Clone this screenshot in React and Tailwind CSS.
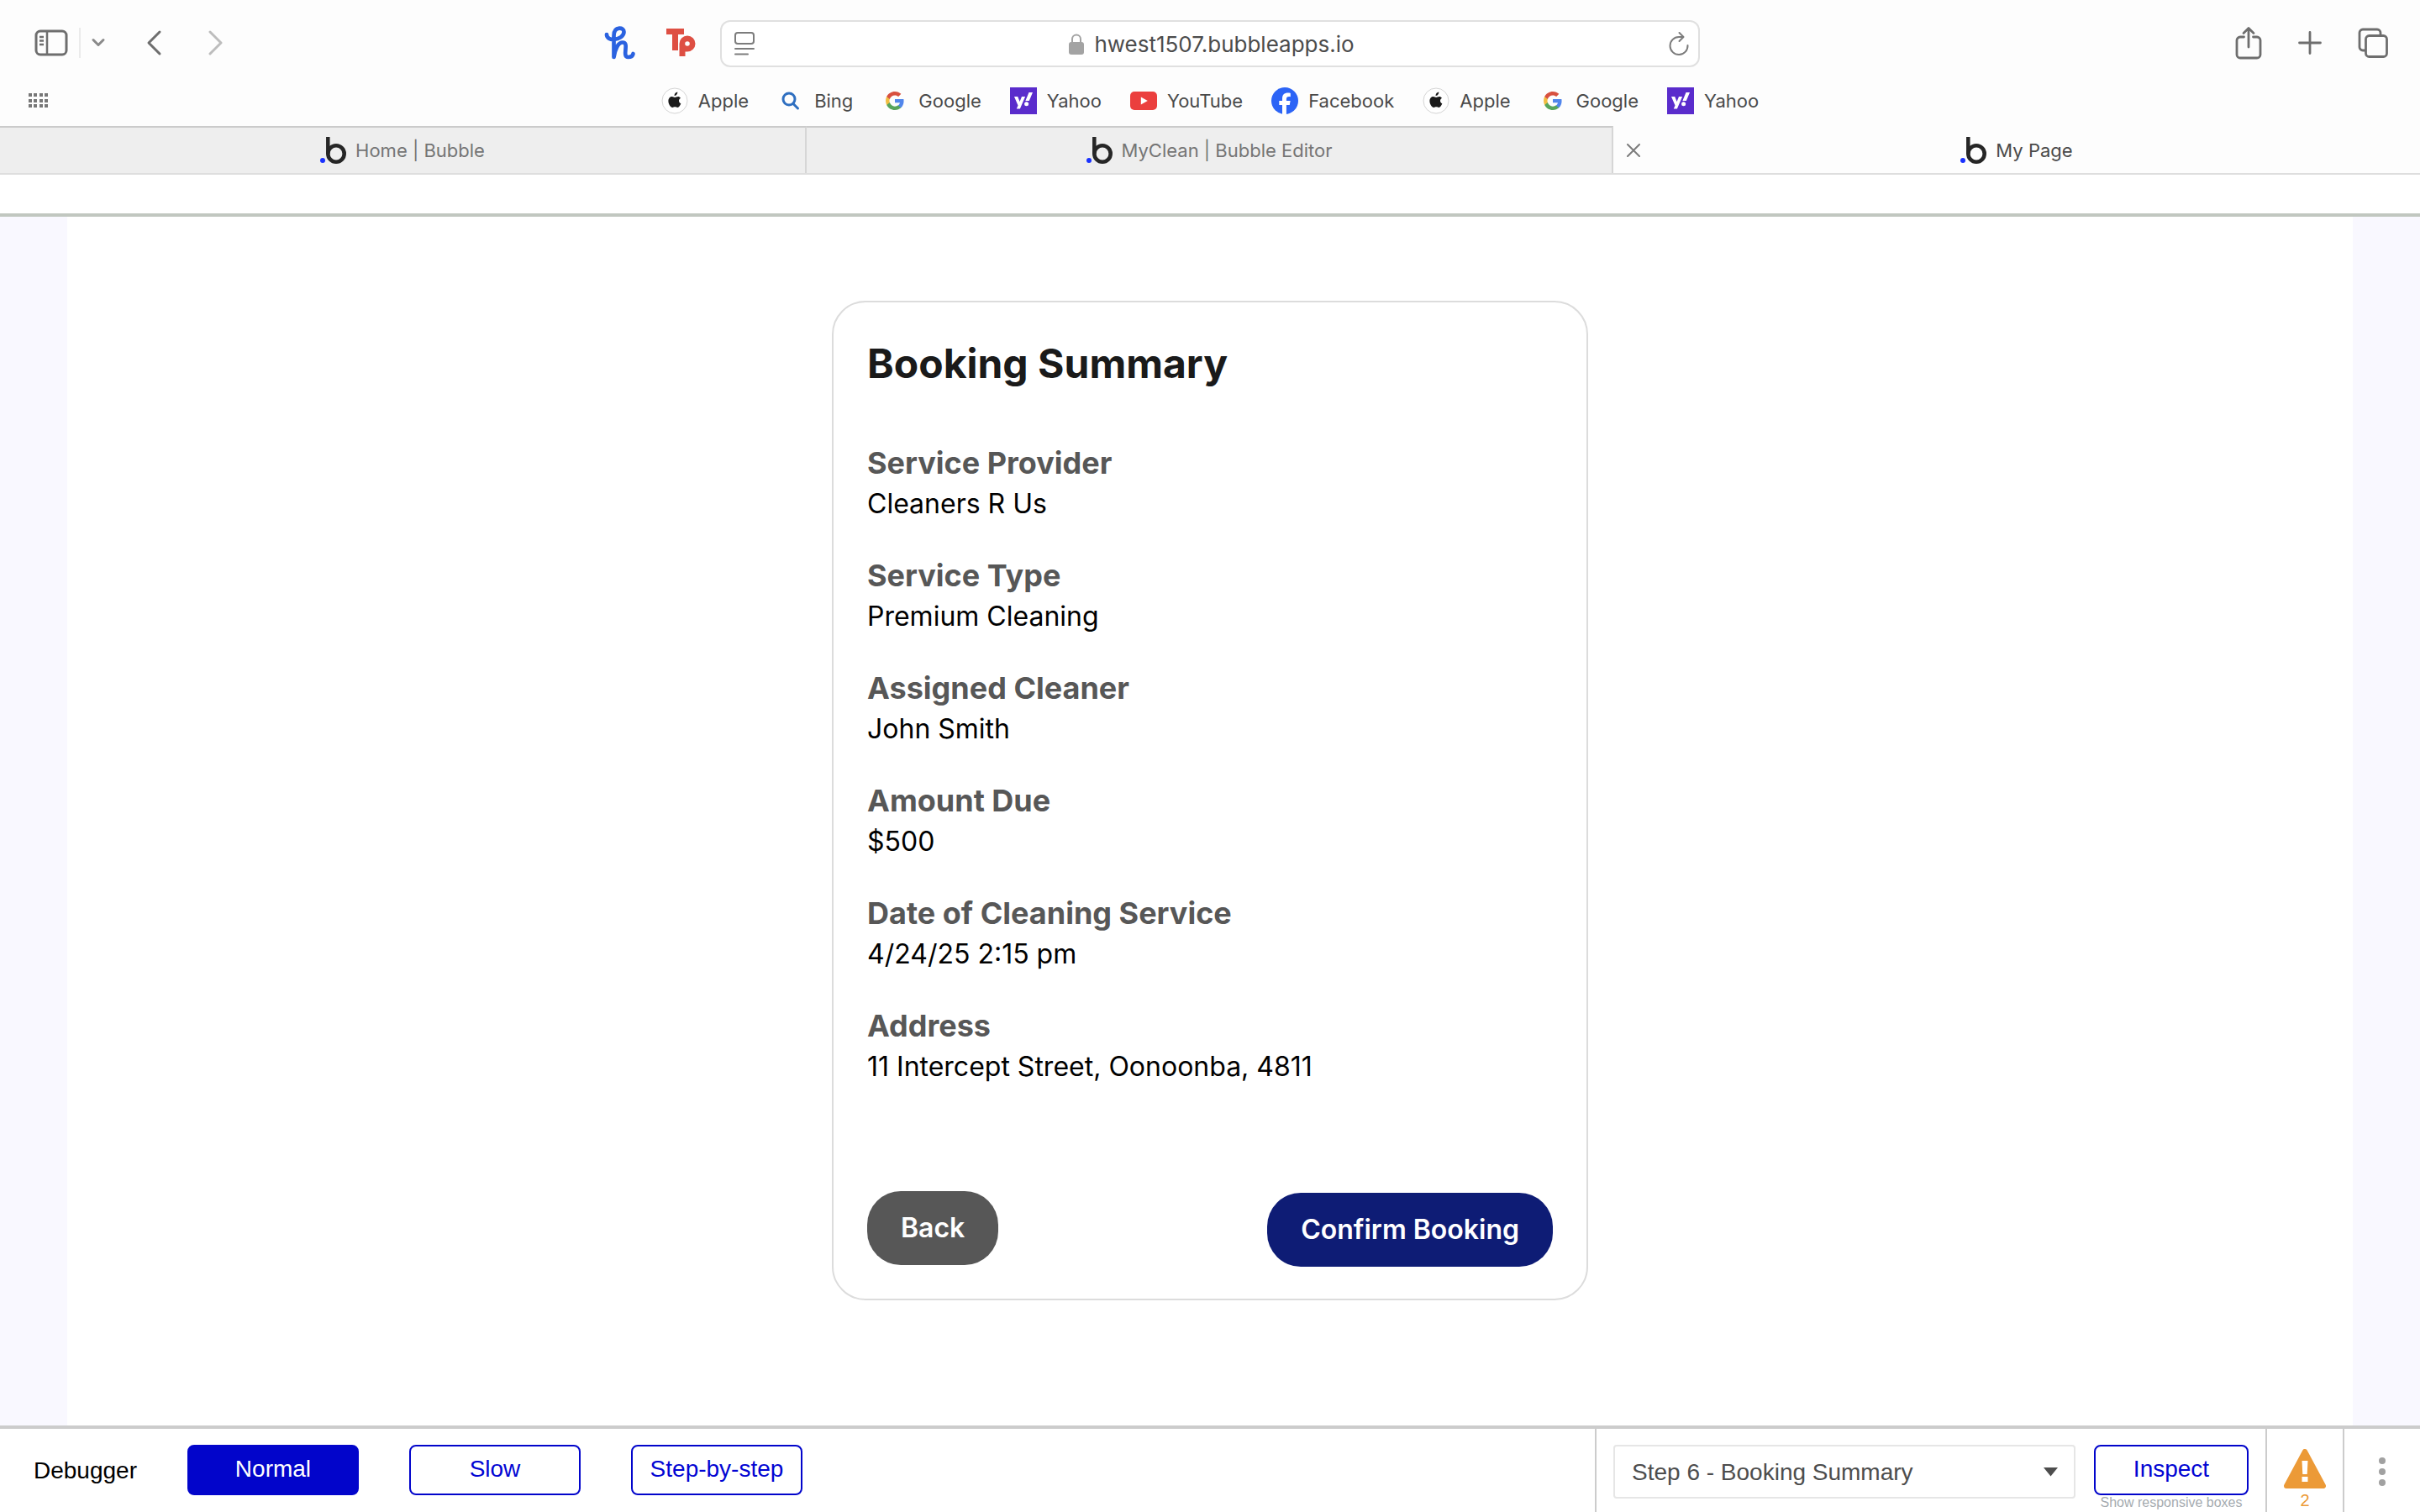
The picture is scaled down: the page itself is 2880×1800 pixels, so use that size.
import React from "react";

function Svg({ w, h, className = "", children, ...rest }) {
  return (
    <svg width={w} height={h} viewBox={`0 0 ${w} ${h}`} fill="none" aria-hidden="true" className={`shrink-0 ${className}`} {...rest}>
      {children}
    </svg>
  );
}

const AppleIcon = () => (
  <Svg w={32} h={32}>
    <circle cx="16" cy="16" r="15" fill="#fff" stroke="#d4d4d4" />
    <path d="M19.3 5.5c.1 1.300-.4 2.400-1.100 3.200-.7.800-1.700 1.300-2.600 1.200-.1-1.200.4-2.300 1.100-3.100.7-.7 1.700-1.200 2.600-1.300zM22.800 13.100c-1.200.8-1.800 1.700-1.800 3 0 1.500.9 2.700 2.300 3.200-.6 1.800-2.200 4.700-4 4.700-1.200 0-1.600-.7-3-.7s-1.900.7-3 .7c-2.200 0-4.900-4-4.900-7.700 0-3.400 2.200-5.300 4.300-5.300 1.400 0 2.600.9 3.400.9.800 0 2.200-1 3.900-1 1.100 0 2.200.6 2.800 1.500z" fill="#1b1b1b" />
  </Svg>
);

const BingIcon = () => (
  <Svg w={32} h={32}>
    <circle cx="14" cy="14" r="7" stroke="#2f6fc0" strokeWidth="3" />
    <path d="M19 19.500l5.500 5.500" stroke="#2f6fc0" strokeWidth="3" strokeLinecap="round" />
  </Svg>
);

const GoogleIcon = () => (
  <Svg w={32} h={32}>
    <g transform="translate(4 4)">
      <path fill="#5186ec" d="M22.560 12.250c0-.78-.07-1.530-.2-2.250H12v4.260h5.920c-.26 1.370-1.040 2.530-2.210 3.310v2.770h3.570c2.080-1.920 3.280-4.740 3.280-8.090z" />
      <path fill="#58a55c" d="M12 23c2.970 0 5.460-.98 7.280-2.660l-3.570-2.770c-.98.66-2.230 1.060-3.710 1.060-2.860 0-5.290-1.930-6.160-4.530H2.180v2.840C3.990 20.530 7.700 23 12 23z" />
      <path fill="#f1bd42" d="M5.840 14.090c-.22-.66-.35-1.360-.35-2.090s.13-1.430.35-2.090V7.070H2.180C1.430 8.550 1 10.220 1 12s.43 3.450 1.180 4.930l3.660-2.840z" />
      <path fill="#d85140" d="M12 5.380c1.620 0 3.060.56 4.210 1.640l3.150-3.150C17.450 2.090 14.970 1 12 1 7.700 1 3.990 3.470 2.180 7.070l3.660 2.840c.87-2.600 3.300-4.530 6.160-4.530z" />
    </g>
  </Svg>
);

const YahooIcon = () => (
  <Svg w={32} h={32}>
    <rect width="32" height="32" fill="#5a2ccc" />
    <path d="M5 11h4.200l2.400 6 2.400-6h4.100l-6.200 14.500H7.800l1.700-4z" fill="#fff" />
    <path d="M22.500 6h4.500l-4.200 10h-4.400z" fill="#fff" />
    <circle cx="19.600" cy="19.800" r="2.500" fill="#fff" />
  </Svg>
);

const YouTubeIcon = () => (
  <Svg w={32} h={32}>
    <rect y="5" width="32" height="22" rx="5" fill="#eb3f3e" />
    <path d="M12.800 11.500l8 4.500-8 4.500z" fill="#fff" />
  </Svg>
);

const FacebookIcon = () => (
  <Svg w={32} h={32}>
    <circle cx="16" cy="16" r="16" fill="#2c64f6" />
    <path d="M13 32V20.900H9.300V16H13v-2.200c0-5 2.200-7.300 7-7.300.9 0 2.100.2 2.800.4v4.300c-.4 0-1-.1-1.700-.1-2.400 0-3.200.9-3.200 3.200V16h4.700l-.8 4.900h-3.900V32z" fill="#fff" />
  </Svg>
);

const BubbleIcon = () => (
  <Svg w={32} h={32}>
    <circle cx="3" cy="28" r="3" fill="#1a32ff" />
    <path d="M9.300 0v20" stroke="#262626" strokeWidth="4.500" />
    <circle cx="19" cy="20" r="9.700" stroke="#262626" strokeWidth="4.600" />
  </Svg>
);

const bookmarks = [
  ["Apple", AppleIcon], ["Bing", BingIcon], ["Google", GoogleIcon], ["Yahoo", YahooIcon], ["YouTube", YouTubeIcon],
  ["Facebook", FacebookIcon], ["Apple", AppleIcon], ["Google", GoogleIcon], ["Yahoo", YahooIcon],
];

function Toolbar() {
  return (
    <div className="grid grid-cols-[1fr_1166px_1fr] items-center pt-6">
      <div className="flex items-center justify-between pr-7 pb-0.5 pl-10 text-[#6e6e6e]">
        <div className="flex items-center">
          <button aria-label="Sidebar">
            <Svg w={42} h={34} stroke="currentColor" strokeWidth="3">
              <rect x="3" y="3" width="36" height="28" rx="5" />
              <path d="M16 3v28M7 10h5M7 14.500h5M7 19h5" strokeWidth="2.500" />
            </Svg>
          </button>
          <span className="ml-3 h-9 w-0.5 bg-[#ebebeb]" />
          <button aria-label="Tab groups" className="ml-3">
            <Svg w={18} h={12} stroke="#8a8a8a" strokeWidth="3" strokeLinecap="round" strokeLinejoin="round"><path d="M3 2.500l6 6 6-6" /></Svg>
          </button>
          <button aria-label="Back" className="ml-12">
            <Svg w={20} h={32} stroke="currentColor" strokeWidth="3" strokeLinecap="round" strokeLinejoin="round"><path d="M16 3L3 16l13 13" /></Svg>
          </button>
          <button aria-label="Forward" className="ml-13">
            <Svg w={20} h={32} stroke="#bdbdbd" strokeWidth="3" strokeLinecap="round" strokeLinejoin="round"><path d="M4 3l13 13L4 29" /></Svg>
          </button>
        </div>
        <div className="flex items-center gap-9">
          <button aria-label="Honey">
            <Svg w={38} h={40} stroke="#2b62e0" strokeWidth="4.700" strokeLinecap="round" strokeLinejoin="round">
              <path d="M3 10c0 4 4 6.500 9 6 6-.8 11.500-4 11.500-9 0-3-2.500-4.500-5.500-4.300-4.500.3-6.500 4-6.500 9V37c1.500-9 5-17.500 10.500-17.500 4 0 4 3.500 3.500 8-.5 5-1 9.500 3 9.500 3 0 5.500-1.500 6-4" />
            </Svg>
          </button>
          <button aria-label="Tp">
            <Svg w={36} h={36}>
              <path d="M0 1h21v7h-7v19H7V8H0z" fill="#de4f43" />
              <path fillRule="evenodd" d="M15.500 34V19a9.500 9.500 0 119.500 9.500h-2.500V34zM25 16.200a2.800 2.800 0 100 5.600 2.800 2.800 0 000-5.600z" fill="#de4f43" />
            </Svg>
          </button>
        </div>
      </div>
      <div className="grid h-14 grid-cols-[1fr_auto_1fr] items-center rounded-xl border-2 border-[#e0e0e0] bg-white pr-[10px] pl-[14px] text-[26px] text-[#4c4c4c]">
        <button aria-label="Reader" className="justify-self-start">
          <Svg w={26} h={30} stroke="#7c7c7c" strokeWidth="2" strokeLinecap="round"><rect x="2" y="2" width="22" height="13" rx="3" /><path d="M2 21h22M2 27.500h15" /></Svg>
        </button>
        <div className="flex items-center gap-3">
          <Svg w={18} h={26}><path d="M4 12V7.500a5 5 0 0110 0V12" stroke="#a3a3a3" strokeWidth="2" /><rect y="11" width="18" height="15" rx="3" fill="#a3a3a3" /></Svg>
          <span>hwest1507.bubbleapps.io</span>
        </div>
        <button aria-label="Reload" className="justify-self-end">
          <Svg w={26} h={30} stroke="#7c7c7c" strokeWidth="2" strokeLinecap="round" strokeLinejoin="round"><path d="M23.500 17A10.500 10.500 0 1113 7h5M13.500 2l5 5-5 5" /></Svg>
        </button>
      </div>
      <div className="flex items-center justify-end gap-[42px] pr-[38px] pb-0.5 text-[#6e6e6e]">
        <button aria-label="Share">
          <Svg w={32} h={40} stroke="currentColor" strokeWidth="2.800" strokeLinecap="round" strokeLinejoin="round"><path d="M10.500 13H6a4 4 0 00-4 4v17a4 4 0 004 4h20a4 4 0 004-4V17a4 4 0 00-4-4h-4.500M16 25V3M10 8.500L16 2.500l6 6" /></Svg>
        </button>
        <button aria-label="New tab">
          <Svg w={30} h={30} stroke="currentColor" strokeWidth="2.800" strokeLinecap="round"><path d="M15 2.500v25M2.500 15h25" /></Svg>
        </button>
        <button aria-label="Tab overview">
          <Svg w={36} h={36} stroke="currentColor" strokeWidth="2.800" strokeLinejoin="round"><rect x="9.500" y="9.500" width="25" height="25" rx="4" /><path d="M9 27H6a4 4 0 01-4-4V6a4 4 0 014-4h17a4 4 0 014 4v3" /></Svg>
        </button>
      </div>
    </div>
  );
}

function Bookmarks() {
  return (
    <nav className="grid h-[70px] grid-cols-[1fr_auto_1fr] items-center pt-[10px] text-[22px] text-[#4a4a4a]">
      <Svg w={26} h={20} className="ml-8" fill="#6e6e6e">
        {[2, 8, 15, 21].map((x) => [1, 8, 14].map((y) => <rect key={`${x}-${y}`} x={x} y={y} width="4" height="4" fill="#777777" />))}
      </Svg>
      <div className="flex items-center gap-[34px]">
        {bookmarks.map(([label, Icon], i) => (
          <a key={i} href="#" className="flex items-center gap-3"><Icon />{label}</a>
        ))}
      </div>
    </nav>
  );
}

function Tabs() {
  return (
    <div className="grid h-[58px] grid-cols-3 border-b-2 border-[#dedede] text-[22px] text-[#757575]">
      {["Home | Bubble", "MyClean | Bubble Editor"].map((t) => (
        <button key={t} className="flex items-center justify-center gap-[10px] border-t-2 border-r-2 border-t-[#cbcbcb] border-r-[#d6d6d6] bg-[#eeeeee]"><BubbleIcon />{t}</button>
      ))}
      <div className="grid grid-cols-[48px_1fr_48px] items-center pt-0.5 text-[#4a4a4a]">
        <button aria-label="Close tab" className="flex justify-center">
          <Svg w={16} h={16} stroke="#7c7c7c" strokeWidth="2" strokeLinecap="round"><path d="M1 1l14 14M15 1L1 15" /></Svg>
        </button>
        <button className="flex items-center justify-center gap-[10px]"><BubbleIcon />My Page</button>
      </div>
    </div>
  );
}

const details = [
  ["Service Provider", "Cleaners R Us"],
  ["Service Type", "Premium Cleaning"],
  ["Assigned Cleaner", "John Smith"],
  ["Amount Due", "$500"],
  ["Date of Cleaning Service", "4/24/25 2:15 pm"],
  ["Address", "11 Intercept Street, Oonoonba, 4811"],
];

function BookingCard() {
  return (
    <section className="w-full max-w-[900px] rounded-[40px] border-2 border-[#dcdcdc] bg-white px-10 pt-10 pb-[38px]">
      <h1 className="text-5xl leading-[66px] font-bold text-[#1a1a1a]">Booking Summary</h1>
      <dl className="mt-[60px] flex flex-col gap-9">
        {details.map(([label, value]) => (
          <div key={label}>
            <dt className="text-4xl leading-[50px] font-bold text-[#575757]">{label}</dt>
            <dd className="text-[32px] leading-[48px] text-black">{value}</dd>
          </div>
        ))}
      </dl>
      <div className="mt-[124px] flex items-start justify-between text-[32px] font-semibold text-white">
        <button className="h-[88px] rounded-[40px] bg-[#575757] px-10">Back</button>
        <button className="mt-0.5 h-[88px] rounded-[40px] bg-[#0e1c75] px-10">Confirm Booking</button>
      </div>
    </section>
  );
}

function Debugger() {
  return (
    <footer className="flex h-[103px] shrink-0 border-t-4 border-[#cccccc] bg-white font-['Liberation_Sans',sans-serif] text-[28px] text-[#0205d3]">
      <div className="flex flex-1 items-start gap-[60px] pt-[19px] pl-10">
        <span className="leading-[62px] text-black">Debugger</span>
        <div className="flex gap-[60px]">
          <button className="h-[60px] w-[204px] rounded-lg border-2 border-[#0205cb] bg-[#0205cb] pb-0.5 text-white">Normal</button>
          <button className="h-[60px] w-[204px] rounded-lg border-2 border-[#0205cb] pb-0.5">Slow</button>
          <button className="h-[60px] w-[204px] rounded-lg border-2 border-[#0205cb] pb-0.5">Step-by-step</button>
        </div>
      </div>
      <div className="flex items-start gap-[22px] border-l-2 border-[#cccccc] pt-[19px] pr-5 pl-5">
        <div className="relative">
          <select aria-label="Element" className="h-16 w-[550px] appearance-none rounded border-2 border-[#e6e6e6] bg-white pt-0.5 pl-5 text-[#4d4d4d]">
            <option>Step 6 - Booking Summary</option>
          </select>
          <Svg w={18} h={11} className="pointer-events-none absolute top-[27px] right-5"><path d="M0 0h17L8.500 10.500z" fill="#4d4d4d" /></Svg>
        </div>
        <div className="flex flex-col items-center">
          <button className="h-[60px] w-[184px] rounded-lg border-2 border-[#0205cb] pb-0.5">Inspect</button>
          <button className="mt-px text-base leading-4 text-[#a5abb0]">Show responsive boxes</button>
        </div>
      </div>
      <button aria-label="2 issues" className="flex w-[92px] flex-col items-center border-l-2 border-[#cccccc] pt-6 text-xl leading-5 text-[#ec9a37]">
        <Svg w={50} h={47}>
          <path d="M25 3L47 44H3z" fill="#ec9a37" stroke="#ec9a37" strokeWidth="6" strokeLinejoin="round" />
          <path d="M21.500 14h7l-.8 16h-5.400z M21.500 33h7v6h-7z" fill="#fff" />
        </Svg>
        <span className="mt-1">2</span>
      </button>
      <button aria-label="More" className="flex w-[92px] justify-center border-l-2 border-[#cccccc] pt-[33px]">
        <Svg w={8} h={36}>{[5, 18, 31].map((y) => <circle key={y} cx="4" cy={y} r="4" fill="#a1a1a1" />)}</Svg>
      </button>
    </footer>
  );
}

export default function App() {
  return (
    <div className="flex min-h-screen flex-col bg-white font-['Inter',sans-serif]">
      <header className="bg-[#fdfdfd]">
        <Toolbar />
        <Bookmarks />
        <Tabs />
      </header>
      <div className="h-[46px] bg-white" />
      <main className="flex flex-1 flex-col border-t-4 border-[#c1c7c0] bg-[#f9f8ff] px-20">
        <div className="flex flex-1 items-start justify-center bg-white pt-[100px] pb-36"><BookingCard /></div>
      </main>
      <Debugger />
    </div>
  );
}
